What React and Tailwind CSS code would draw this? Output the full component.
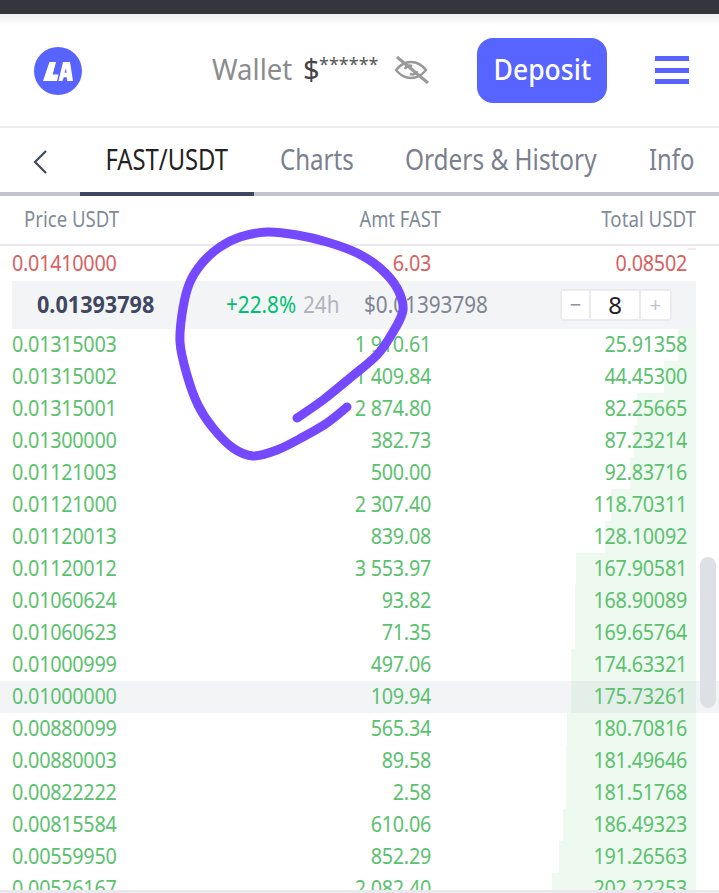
const font = { fontFamily: '"Noto Sans", sans-serif' };
const bids = [
  ["0.01315003", "1 910.61", "25.91358", 678],
  ["0.01315002", "1 409.84", "44.45300", 664],
  ["0.01315001", "2 874.80", "82.25665", 637],
  ["0.01300000", "382.73", "87.23214", 634],
  ["0.01121003", "500.00", "92.83716", 630],
  ["0.01121000", "2 307.40", "118.70311", 611],
  ["0.01120013", "839.08", "128.10092", 605],
  ["0.01120012", "3 553.97", "167.90581", 576],
  ["0.01060624", "93.82", "168.90089", 575],
  ["0.01060623", "71.35", "169.65764", 575],
  ["0.01000999", "497.06", "174.63321", 571],
  ["0.01000000", "109.94", "175.73261", 571],
  ["0.00880099", "565.34", "180.70816", 567],
  ["0.00880003", "89.58", "181.49646", 566],
  ["0.00822222", "2.58", "181.51768", 566],
  ["0.00815584", "610.06", "186.49323", 563],
  ["0.00559950", "852.29", "191.26563", 559],
  ["0.00526167", "2 082.40", "202.22253", 552],
];

const pts = [[297,418],[323,400],[350,378],[377,355],[393,332],[403,310],[397,288],[380,268],[357,253],[327,242],[297,235],[267,232],[240,237],[220,247],[203,262],[190,282],[183,308],[180,342],[187,375],[198,405],[213,428],[233,448],[253,456],[277,450],[303,437],[327,423],[347,407]];
const stroke = pts.reduce((d, p, i) => {
  if (i === 0) return `M${p[0]} ${p[1]}`;
  const a = pts[Math.max(i - 2, 0)], b = pts[i - 1], c = pts[Math.min(i + 1, pts.length - 1)];
  return `${d}C${b[0] + (p[0] - a[0]) / 6} ${b[1] + (p[1] - a[1]) / 6} ${p[0] - (c[0] - b[0]) / 6} ${p[1] - (c[1] - b[1]) / 6} ${p[0]} ${p[1]}`;
}, "");

function Cells({ p, a, t }) {
  return (
    <>
      <span className="relative ml-[12px] w-[201px] origin-left scale-x-[0.9] whitespace-nowrap">{p}</span>
      <span className="relative w-[218px] origin-right scale-x-[0.9] text-right whitespace-nowrap">{a}</span>
      <span className="relative w-[256px] origin-right scale-x-[0.9] text-right whitespace-nowrap">{t}</span>
    </>
  );
}

function Row({ p, a, t, left, hl }) {
  return (
    <div className={`relative h-8 pb-1 flex items-center text-[22px] leading-[28px] text-[#5cc16f] tracking-[-0.3px] ${hl ? "bg-[#f3f4f6]" : ""}`}>
      <div className="absolute top-0 bottom-0 right-[23px] bg-[#5cc16f]/10" style={{ left }} />
      <Cells p={p} a={a} t={t} />
    </div>
  );
}

export default function App() {
  return (
    <div style={font} className="relative w-[719px] h-[893px] overflow-hidden bg-white">
      <div className="h-[14px] bg-[#35363c]" />
      <div className="h-[112px] flex items-center bg-gradient-to-b from-[#f0f0f0] to-white to-[12px]">
        <div className="ml-[34px] mt-[2px] w-12 h-12 rounded-full bg-[#5864ff] flex items-center justify-center">
          <svg width="30" height="19" viewBox="0 0 30 19" fill="white">
            <path d="M6.500 0H13L9.700 12.500H15.500L14 19H0Z" />
            <path fillRule="evenodd" d="M20 0H27L30 19H24.200L23.700 15.300H20.800L19.300 19H15.500ZM23 6L21.500 10.800H23.500Z" />
          </svg>
        </div>
        <span className="ml-[130px] w-[91px] pb-[2px] origin-left scale-x-[0.95] text-[29px] text-[#8c8c8c] whitespace-nowrap">Wallet</span>
        <span className="w-[16px] pb-[2px] text-[29px] text-[#444]">$</span>
        <span className="w-[74px] -mt-[11px] text-[18px] text-[#555] whitespace-nowrap">******</span>
        <svg className="w-9 h-7" viewBox="0 0 36 28" fill="none" stroke="#999999" strokeWidth="2.500">
          <path d="M3 14c4-5 9-8 15-8s11 3 15 8c-4 5-9 8-15 8S7 19 3 14z" />
          <path d="M12 13c1-3 4-4 7-3M24 15c-1 3-4 4-7 3" />
          <path d="M4 1l31 26" strokeWidth="3" />
        </svg>
        <div className="ml-[48px] w-[130px] h-[65px] pb-[2px] rounded-[16px] bg-[#5864ff] text-white text-[29px] font-medium flex items-center justify-center">
          <span className="scale-x-[0.915]">Deposit</span>
        </div>
        <div className="ml-[48px] w-[34px] h-7 flex flex-col justify-between">
          <div className="h-[5px] bg-[#5864ff]" /><div className="h-[5px] bg-[#5864ff]" /><div className="h-[5px] bg-[#5864ff]" />
        </div>
      </div>
      <div className="h-[2px] bg-[#ececef]" />
      <div className="h-[68px] flex border-b-4 border-[#c0c3cc] text-[29px] text-[#7a808f]">
        <div className="w-[80px] flex items-center pl-[32px] pt-1">
          <svg width="16" height="26" viewBox="0 0 16 26" fill="none" stroke="#3f4a60" strokeWidth="2.200"><path d="M14 2L3 13l11 11" /></svg>
        </div>
        <div className="w-[174px] h-[68px] pb-[2px] border-b-4 border-[#3f4760] flex items-center justify-center text-[#222]">
          <span className="scale-x-[0.82] whitespace-nowrap">FAST/USDT</span>
        </div>
        <div className="ml-[26px] pb-[2px] w-[125px] flex items-center">
          <span className="origin-left scale-x-[0.83] whitespace-nowrap">Charts</span>
        </div>
        <div className="w-[244px] pb-[2px] flex items-center">
          <span className="origin-left scale-x-[0.84] whitespace-nowrap">Orders &amp; History</span>
        </div>
        <div className="w-[60px] pb-[2px] flex items-center">
          <span className="origin-left scale-x-[0.82] whitespace-nowrap">Info</span>
        </div>
      </div>
      <div className="h-[50px] flex items-center border-b-2 border-[#e8e8ee] text-[21px] text-[#7f8b99]">
        <span className="ml-[24px] w-[200px] origin-left scale-x-[0.885] whitespace-nowrap">Price USDT</span>
        <span className="w-[217px] origin-right scale-x-[0.875] text-right whitespace-nowrap">Amt FAST</span>
        <span className="w-[255px] origin-right scale-x-[0.89] text-right whitespace-nowrap">Total USDT</span>
      </div>
      <div className="relative mt-[2px] h-8 pb-1 flex items-center text-[22px] leading-[28px] text-[#d86060] tracking-[-0.3px]">
        <div className="absolute top-0 h-[2px] left-[688px] right-[23px] bg-[#fbe9e9]" />
        <Cells p="0.01410000" a="6.03" t="0.08502" />
      </div>
      <div className="mt-px mx-[12px] w-[684px] h-[48px] bg-[#f3f4f6] flex items-center">
        <span className="ml-[25px] w-[189px] pb-[2px] origin-left scale-x-[0.9] text-[24px] font-bold text-[#3f4760]">0.01393798</span>
        <span className="w-[77px] pb-[2px] origin-left scale-x-[0.9] text-[23px] text-[#00c073]">+22.8%</span>
        <span className="w-[61px] pb-[2px] origin-left scale-x-[0.9] text-[23px] text-[#b0b4bf]">24h</span>
        <span className="w-[196px] pb-[2px] origin-left scale-x-[0.9] text-[23px] text-[#7f8594]">$0.01393798</span>
        <div className="w-[112px] h-[32px] rounded-[3px] border-2 border-[#ebebef] bg-white flex items-center text-center">
          <span className="w-[29px] h-7 leading-7 text-[#8e919c] text-[20px] border-r-2 border-[#ebebef]">−</span>
          <span className="w-[50px] h-7 leading-7 text-[24px] text-[#222] border-r-2 border-[#ebebef]">8</span>
          <span className="w-[29px] h-7 leading-7 text-[#c0c3cc] text-[20px]">+</span>
        </div>
      </div>
      {bids.map((b, i) => (
        <Row key={b[0]} p={b[0]} a={b[1]} t={b[2]} left={b[3]} hl={i === 11} />
      ))}
      <div className="absolute left-0 right-0 bottom-0 h-[3px] bg-[#e8e8ee]" />
      <div className="absolute left-[700px] top-[557px] w-4 h-[151px] rounded-lg bg-[#dde0e4]" />
      <svg className="absolute inset-0 pointer-events-none" width="719" height="893" viewBox="0 0 719 893" fill="none">
        <path d={stroke} stroke="#7549ff" strokeWidth="9" strokeLinecap="round" strokeLinejoin="round" />
      </svg>
    </div>
  );
}
